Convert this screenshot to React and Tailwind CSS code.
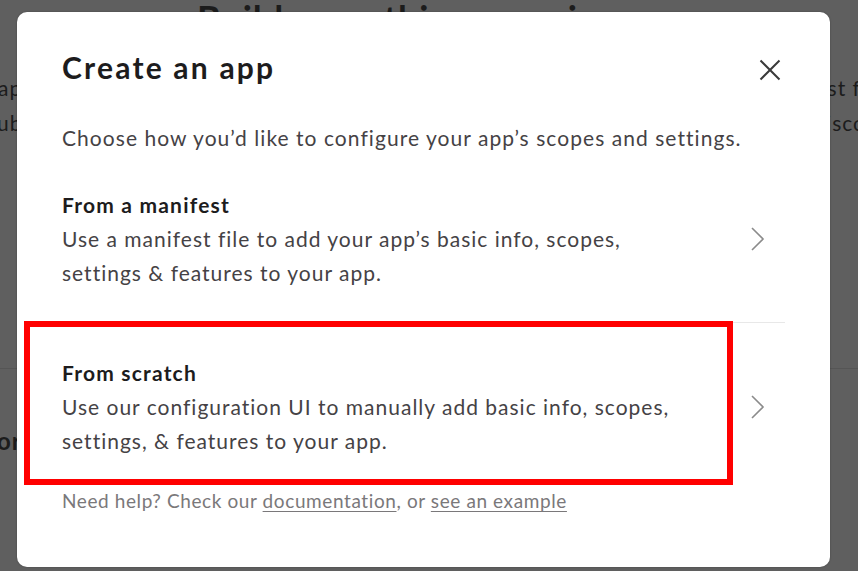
import React from 'react'

function Chevron() {
  return (
    <svg width="16" height="26" viewBox="0 0 16 26" fill="none" className="shrink-0">
      <path d="M2 2 L13 13 L2 24" stroke="#8b8b8b" strokeWidth="1.6" />
    </svg>
  )
}

function Option({ title, desc, bordered }) {
  return (
    <div className={`flex items-center pt-[33px] pb-[32px] ${bordered ? 'border-t border-[#e8e8e8]' : ''}`}>
      <div className="flex-1">
        <div className="text-[21px] leading-[34px] tracking-[1.2px] font-bold text-[#1d1c1d]">{title}</div>
        <div className="text-[21px] leading-[34px] tracking-[1px] text-[#454245]">{desc}</div>
      </div>
      <div className="pr-[19px]">
        <Chevron />
      </div>
    </div>
  )
}

export default function App() {
  return (
    <div className="relative w-[858px] h-[571px] overflow-hidden bg-[#5f5f5f] text-[#1c1c1c] font-['Lato','Liberation_Sans',sans-serif]">
      {/* page behind the dialog */}
      <div className="flex flex-col">
        <h1 className="-mt-[6px] pl-[197px] text-[36px] leading-[48px] tracking-[1px] font-bold whitespace-nowrap">Build something amazing</h1>
        <div className="mt-[28px] flex justify-between text-[21px] leading-[35px] tracking-[1px] whitespace-nowrap">
          <span className="-ml-[2px]">ap</span>
          <span className="-mr-[9px]">st fi</span>
        </div>
        <div className="flex justify-between text-[21px] leading-[35px] tracking-[1px] whitespace-nowrap">
          <span className="-ml-[3px]">ub</span>
          <span className="-mr-[8px]">isco</span>
        </div>
        <div className="mt-[228px] border-t border-[#555555]" />
        <div className="mt-[56px] -ml-[3px] text-[24px] leading-[32px] tracking-[1px] font-bold">or</div>
      </div>

      {/* dialog */}
      <div className="absolute left-[17px] top-[12px] w-[813px] h-[555px] rounded-[10px] bg-white px-[45px] pt-[37px] shadow-[0_0_2px_rgba(0,0,0,0.3)]">
        <div className="flex items-center justify-between">
          <h2 className="text-[30px] leading-[36px] tracking-[2.2px] font-bold text-[#1d1c1d]">Create an app</h2>
          <button className="mr-[4px] mt-[6px]">
            <svg width="22" height="22" viewBox="0 0 22 22" fill="none">
              <path d="M1.5 1.5 L20.5 20.5 M20.5 1.5 L1.5 20.5" stroke="#3a3a3a" strokeWidth="2" />
            </svg>
          </button>
        </div>
        <p className="mt-[36px] text-[21px] leading-[34px] tracking-[1.05px] text-[#454245] whitespace-nowrap">
          Choose how you’d like to configure your app’s scopes and settings.
        </p>
        <Option
          title="From a manifest"
          desc={<>Use a manifest file to add your app’s basic info, scopes,<br />settings &amp; features to your app.</>}
        />
        <Option
          bordered
          title="From scratch"
          desc={<>Use our configuration UI to manually add basic info, scopes,<br />settings, &amp; features to your app.</>}
        />
        <p className="-mt-[2px] text-[19px] leading-[26px] tracking-[0.6px] text-[#7a787a]">
          Need help? Check our <a className="underline underline-offset-[3px]">documentation</a>, or <a className="underline underline-offset-[3px]">see an example</a>
        </p>

        {/* highlight annotation */}
        <div className="absolute left-[7px] top-[309px] w-[709px] h-[164px] border-[6px] border-[#ff0000] pointer-events-none" />
      </div>
    </div>
  )
}
